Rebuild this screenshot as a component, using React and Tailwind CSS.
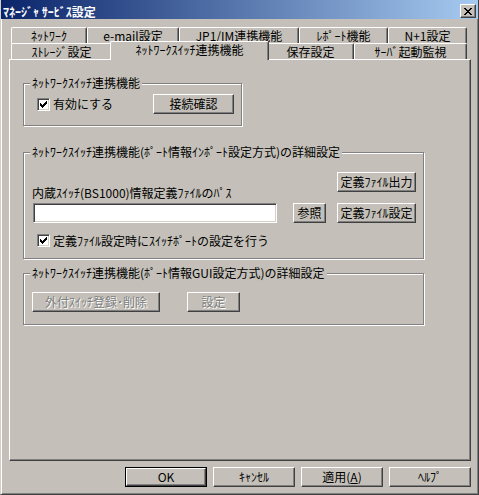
import React from 'react';

const CHECK = ["......X", ".....XX", "X...XXX", "XX.XXX.", "XXXXX..", ".XXX...", "..X...."];
const XMARK = ["XX....XX", ".XX..XX.", "..XXXX..", "...XX...", "..XXXX..", ".XX..XX.", "XX....XX"];

function Pixels({ rows, color = '#000' }) {
  const w = rows[0].length;
  const h = rows.length;
  return (
    <svg width={w} height={h} viewBox={`0 0 ${w} ${h}`} shapeRendering="crispEdges">
      {rows.flatMap((row, y) =>
        row.split('').map((c, x) =>
          c === 'X' ? <rect key={`${x}-${y}`} x={x} y={y} width="1" height="1" fill={color} /> : null
        )
      )}
    </svg>
  );
}

function CheckBox({ label, className = '' }) {
  return (
    <div className={`flex items-center ${className}`}>
      <div className="w-[13px] h-[13px] bg-white border border-t-[#808080] border-l-[#808080] border-r-white border-b-white shadow-[inset_1px_1px_0_#404040,inset_-1px_-1px_0_#d4d0c8] flex items-center justify-center">
        <Pixels rows={CHECK} />
      </div>
      <span className="ml-[3px] leading-[12px]">{label}</span>
    </div>
  );
}

function Btn({ children, className = '', disabled = false, isDefault = false }) {
  const face =
    'flex items-center justify-center w-full h-full border border-t-white border-l-white border-r-[#404040] border-b-[#404040] shadow-[inset_-1px_-1px_0_#808080] leading-[12px] whitespace-nowrap ' +
    (disabled ? 'text-[#808080] [text-shadow:1px_1px_0_#fff]' : 'text-black');
  if (isDefault) {
    return (
      <div className={`border border-black ${className}`}>
        <div className={face}>{children}</div>
      </div>
    );
  }
  return (
    <div className={className}>
      <div className={face}>{children}</div>
    </div>
  );
}

function Group({ label, className = '', children }) {
  return (
    <div className={`relative border border-[#808080] shadow-[inset_1px_1px_0_#fff,1px_1px_0_#fff] ${className}`}>
      <span className="absolute -top-[7px] left-[6px] px-[2px] bg-[#c4c0b9] leading-[12px] whitespace-nowrap">{label}</span>
      {children}
    </div>
  );
}

function Tab({ label, className = '' }) {
  return (
    <div
      className={`flex items-center justify-center h-[16px] border-t border-l border-r border-t-white border-l-white border-r-[#404040] shadow-[inset_-1px_0_0_#808080] rounded-t-[2px] bg-[#c4c0b9] leading-[12px] whitespace-nowrap ${className}`}
    >
      {label}
    </div>
  );
}

export default function App() {
  return (
    <div className="w-[479px] h-[495px] bg-[#c4c0b9] border-l border-l-[#d4d0c8] border-r border-r-[#404040] border-b border-b-[#404040] shadow-[inset_1px_0_0_#fff,inset_-1px_-1px_0_#808080] flex flex-col font-['Noto_Sans_CJK_JP','Noto_Sans_CJK_SC',sans-serif] text-[12px] text-black overflow-hidden">
      {/* Title bar */}
      <div className="h-[19px] shrink-0 bg-[linear-gradient(to_right,#0a246a,#a6caf0)] flex items-start justify-between pl-[2px] pr-[2px]">
        <span className="mt-[6px] text-white font-bold leading-[12px] whitespace-nowrap">ﾏﾈｰｼﾞｬ ｻｰﾋﾞｽ設定</span>
        <div className="mt-[4px] w-[16px] h-[14px] bg-[#c4c0b9] border border-t-white border-l-white border-r-[#404040] border-b-[#404040] shadow-[inset_-1px_-1px_0_#808080] flex items-center justify-center">
          <Pixels rows={XMARK} />
        </div>
      </div>

      {/* Tabs */}
      <div className="mt-[8px] ml-[10px] w-[456px] flex flex-col">
        <div className="flex">
          <Tab label="ﾈｯﾄﾜｰｸ" className="w-[76px]" />
          <Tab label="e-mail設定" className="w-[92px]" />
          <Tab label="JP1/IM連携機能" className="w-[120px]" />
          <Tab label="ﾚﾎﾟｰﾄ機能" className="w-[89px]" />
          <Tab label="N+1設定" className="w-[79px]" />
        </div>
        <div className="flex items-start">
          <Tab label="ｽﾄﾚｰｼﾞ設定" className="w-[101px]" />
          <div className="relative z-10 w-[159px] h-[19px] -mx-[2px] -mt-[2px] -mb-[1px] flex items-center justify-center pb-[3px] border-t border-l border-r border-t-white border-l-white border-r-[#404040] shadow-[inset_-1px_0_0_#808080] rounded-t-[2px] bg-[#c4c0b9] leading-[12px] whitespace-nowrap">
            ﾈｯﾄﾜｰｸｽｲｯﾁ連携機能
          </div>
          <Tab label="保存設定" className="w-[87px]" />
          <Tab label="ｻｰﾊﾞ起動監視" className="w-[113px]" />
        </div>
      </div>

      {/* Panel */}
      <div className="ml-[8px] w-[462px] h-[402px] shrink-0 border border-t-white border-l-white border-r-[#404040] border-b-[#404040] shadow-[inset_-1px_-1px_0_#808080] pl-[13px] pt-[23px] flex flex-col">
        <Group label="ﾈｯﾄﾜｰｸｽｲｯﾁ連携機能" className="w-[219px] h-[43px] pt-[10px] pl-[13px] pr-[7px]">
          <div className="flex items-center justify-between">
            <CheckBox label="有効にする" />
            <Btn className="w-[81px] h-[20px]">接続確認</Btn>
          </div>
        </Group>

        <Group
          label="ﾈｯﾄﾜｰｸｽｲｯﾁ連携機能(ﾎﾟｰﾄ情報ｲﾝﾎﾟｰﾄ設定方式)の詳細設定"
          className="mt-[26px] w-[401px] h-[107px] pt-[19px] pl-[9px] pr-[6px]"
        >
          <div className="flex items-end gap-[11px]">
            <div className="flex flex-col">
              <span className="leading-[12px] mb-[4px] -ml-[1px] whitespace-nowrap">内蔵ｽｲｯﾁ(BS1000)情報定義ﾌｧｲﾙのﾊﾟｽ</span>
              <div className="flex items-center">
                <div className="w-[244px] h-[20px] bg-white border border-t-[#808080] border-l-[#808080] border-r-white border-b-white shadow-[inset_1px_1px_0_#404040,inset_-1px_-1px_0_#d4d0c8]" />
                <Btn className="ml-[16px] w-[33px] h-[20px]">参照</Btn>
              </div>
            </div>
            <div className="flex flex-col gap-[11px]">
              <Btn className="w-[79px] h-[20px]">定義ﾌｧｲﾙ出力</Btn>
              <Btn className="w-[79px] h-[20px]">定義ﾌｧｲﾙ設定</Btn>
            </div>
          </div>
          <CheckBox label="定義ﾌｧｲﾙ設定時にｽｲｯﾁﾎﾟｰﾄの設定を行う" className="mt-[11px] ml-[4px]" />
        </Group>

        <Group
          label="ﾈｯﾄﾜｰｸｽｲｯﾁ連携機能(ﾎﾟｰﾄ情報GUI設定方式)の詳細設定"
          className="mt-[14px] w-[401px] h-[52px] pt-[18px] pl-[8px]"
        >
          <div className="flex items-center gap-[27px]">
            <Btn disabled className="w-[128px] h-[20px]">外付ｽｲｯﾁ登録･削除</Btn>
            <Btn disabled className="w-[53px] h-[20px]">設定</Btn>
          </div>
        </Group>
      </div>

      {/* Bottom buttons */}
      <div className="mt-[6px] pr-[7px] flex justify-end gap-[6px]">
        <Btn isDefault className="w-[82px] h-[20px]">OK</Btn>
        <Btn className="w-[82px] h-[20px]">ｷｬﾝｾﾙ</Btn>
        <Btn className="w-[82px] h-[20px]">
          適用(<span className="underline">A</span>)
        </Btn>
        <Btn className="w-[82px] h-[20px]">ﾍﾙﾌﾟ</Btn>
      </div>
    </div>
  );
}
